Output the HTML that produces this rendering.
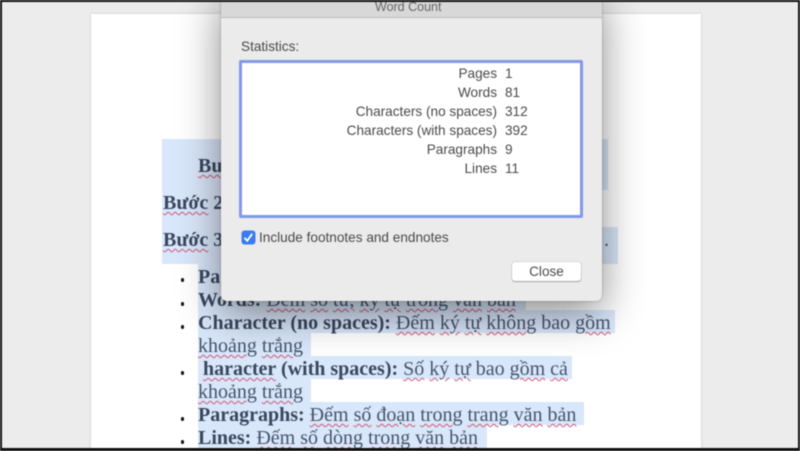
<!DOCTYPE html>
<html><head><meta charset="utf-8">
<style>
html,body{margin:0;padding:0;width:800px;height:451px;overflow:hidden;background:#ececec}
#wrap{position:relative;width:800px;height:451px;overflow:hidden;filter:blur(0.4px)}
.page{position:absolute;left:91px;top:14px;width:610px;height:450px;background:#fff;box-shadow:0 0 2px #bbb}
.hl{position:absolute;background:#d9e7fa}
.t{position:absolute;font:20px/23px "Liberation Serif","Noto Serif CJK SC",serif;color:#46536c;white-space:pre}
.t b{color:#3a475f}
.w{text-decoration:underline wavy #d0587a 1px;text-underline-offset:2px}
.dot{position:absolute;left:180.5px;width:3.5px;height:3.5px;border-radius:50%;background:#111}
.dlg{position:absolute;left:221px;top:-10px;width:381px;height:311px;background:#ebebeb;border-radius:0 0 6px 6px;box-shadow:0 12px 42px rgba(0,0,0,.46),0 0 2px rgba(0,0,0,.3)}
.bar{position:absolute;left:0;top:0;width:381px;height:27px;background:#d8d8d8;border-bottom:1px solid #bdbdbd}
.s{position:absolute;font:13.6px/19px "Liberation Sans",sans-serif;color:#4a4a4a;white-space:pre}
.box{position:absolute;left:18px;top:70px;width:338px;height:152px;background:#fff;border:3px solid #8299e8;border-radius:2px}
.r{text-align:right;left:60px;width:195px}
.v{left:263px}
.frame{position:absolute;left:0;top:0;width:800px;height:451px;box-sizing:border-box;border:2px solid #111;border-bottom-width:3px;pointer-events:none}
</style></head><body>
<div id="wrap">
<div class="page"></div>

<div class="hl" style="left:162px;top:139px;width:446px;height:51px"></div>
<div class="hl" style="left:162px;top:190px;width:200px;height:37px"></div>
<div class="hl" style="left:162px;top:227px;width:456px;height:37px"></div>
<div class="hl" style="left:198px;top:264px;width:200px;height:23px"></div>
<div class="hl" style="left:198px;top:287px;width:328px;height:23px"></div>
<div class="hl" style="left:198px;top:310px;width:417px;height:23px"></div>
<div class="hl" style="left:198px;top:333px;width:113px;height:23px"></div>
<div class="hl" style="left:198px;top:356px;width:374px;height:23px"></div>
<div class="hl" style="left:198px;top:379px;width:113px;height:23px"></div>
<div class="hl" style="left:198px;top:402px;width:386px;height:23px"></div>
<div class="hl" style="left:198px;top:425px;width:289px;height:26px"></div>

<div class="t" style="left:198px;top:155px"><b><span class="w">Bư</span></b></div>
<div class="t" style="left:163px;top:192px"><b><span class="w">Bước</span> 2</b></div>
<div class="t" style="left:163px;top:229px"><b><span class="w">Bước</span> 3</b></div>
<div class="t" style="left:604px;top:229px">.</div>

<div class="dot" style="top:278px"></div>
<div class="dot" style="top:302px"></div>
<div class="dot" style="top:325px"></div>
<div class="dot" style="top:371px"></div>
<div class="dot" style="top:417px"></div>
<div class="dot" style="top:440px"></div>

<div class="t" style="left:198px;top:266px"><b>Pages:</b></div>
<div class="t" style="left:198px;top:289px"><b>Words:</b> <span class="w">Đếm</span> <span class="w">số</span> <span class="w">từ,</span> <span class="w">ký</span> <span class="w">tự</span> <span class="w">trong</span> <span class="w">văn</span> <span class="w">bản</span></div>
<div class="t" style="left:198px;top:312px"><b>Character (no spaces):</b> <span class="w">Đếm</span> <span class="w">ký</span> <span class="w">tự</span> <span class="w">không</span> bao <span class="w">gồm</span></div>
<div class="t" style="left:198px;top:335px"><span class="w">khoảng</span> <span class="w">trắng</span></div>
<div class="t" style="left:203px;top:358px"><b><span class="w">haracter</span> (with spaces):</b> <span class="w">Số</span> <span class="w">ký</span> <span class="w">tự</span> bao <span class="w">gồm</span> <span class="w">cả</span></div>
<div class="t" style="left:198px;top:381px"><span class="w">khoảng</span> <span class="w">trắng</span></div>
<div class="t" style="left:198px;top:404px"><b>Paragraphs:</b> <span class="w">Đếm</span> <span class="w">số</span> <span class="w">đoạn</span> <span class="w">trong</span> <span class="w">trang</span> <span class="w">văn</span> <span class="w">bản</span></div>
<div class="t" style="left:198px;top:427px"><b>Lines:</b> <span class="w">Đếm</span> <span class="w">số</span> <span class="w">dòng</span> <span class="w">trong</span> <span class="w">văn</span> <span class="w">bản</span></div>

<div class="dlg">
  <div class="bar"></div>
  <div class="s" style="left:154px;top:8px;color:#666;font-size:12.5px">Word Count</div>
  <div class="s" style="left:20px;top:47px">Statistics:</div>
  <div class="box">
    <div class="s r" style="top:1px">Pages</div><div class="s v" style="top:1px">1</div>
    <div class="s r" style="top:20px">Words</div><div class="s v" style="top:20px">81</div>
    <div class="s r" style="top:39px">Characters (no spaces)</div><div class="s v" style="top:39px">312</div>
    <div class="s r" style="top:58px">Characters (with spaces)</div><div class="s v" style="top:58px">392</div>
    <div class="s r" style="top:77px">Paragraphs</div><div class="s v" style="top:77px">9</div>
    <div class="s r" style="top:96px">Lines</div><div class="s v" style="top:96px">11</div>
  </div>
  <svg style="position:absolute;left:20px;top:240px" width="15" height="15" viewBox="0 0 15 15"><rect width="14" height="14" x=".5" y=".5" rx="3" fill="#3b7bf0"/><path d="M3.5 7.8 L6.2 10.8 L11.2 3.8" fill="none" stroke="#fff" stroke-width="1.8"/></svg>
  <div class="s" style="left:38px;top:238px">Include footnotes and endnotes</div>
  <div style="position:absolute;left:291px;top:272px;width:69px;height:19px;background:#fff;border-radius:3px;box-shadow:0 0 1px rgba(0,0,0,.5),0 1px 1px rgba(0,0,0,.25);font:13.6px/19px 'Liberation Sans',sans-serif;color:#4a4a4a;text-align:center">Close</div>
</div>
<div class="frame"></div>
</div>
</body></html>
